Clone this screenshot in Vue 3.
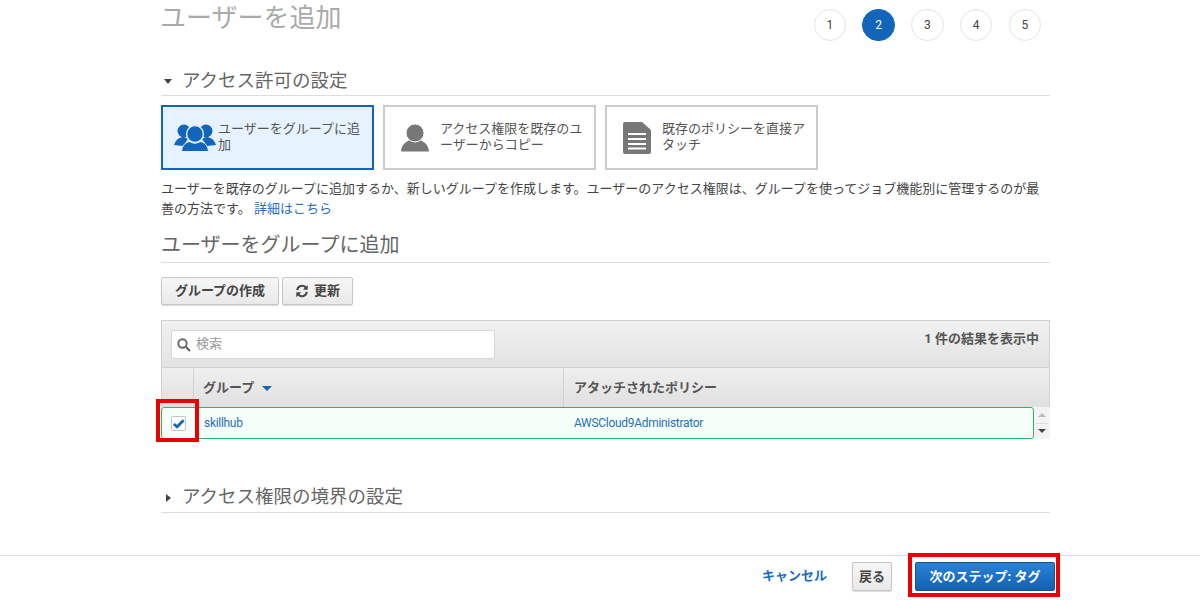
<script setup>
const steps = [1, 2, 3, 4, 5]
const cards = [
  { text: 'ユーザーをグループに追加', icon: 'group', active: true },
  { text: 'アクセス権限を既存のユーザーからコピー', icon: 'user', active: false },
  { text: '既存のポリシーを直接アタッチ', icon: 'doc', active: false },
]
</script>

<template>
  <div class="page">
    <div class="main">
      <header class="top">
        <h1 class="title">ユーザーを追加</h1>
        <ol class="steps">
          <li v-for="s in steps" :key="s" class="step" :class="{ current: s === 2 }">{{ s }}</li>
        </ol>
      </header>

      <div class="section-head first">
        <span class="caret down"></span>
        <h2>アクセス許可の設定</h2>
      </div>

      <div class="cards">
        <div v-for="c in cards" :key="c.icon" class="card" :class="{ active: c.active }">
          <svg v-if="c.icon === 'group'" class="ico group" viewBox="0 0 42 28">
            <g fill="#1166bb">
              <circle cx="10" cy="7" r="6.500" />
              <circle cx="32" cy="7" r="6.500" />
              <path d="M0 21 C2 15 6 13 10 13 L14 15 L9 22 Z" />
              <path d="M42 21 C40 15 36 13 32 13 L28 15 L33 22 Z" />
              <circle cx="21" cy="10" r="8.400" stroke="#e6f2fd" stroke-width="1.400" />
              <path d="M7.500 27.500 C8 21 12 18 16 17.500 C18 19.700 24 19.700 26 17.500 C30 18 34 21 34.500 27.500 Z" stroke="#e6f2fd" stroke-width="1" />
            </g>
          </svg>
          <svg v-else-if="c.icon === 'user'" class="ico user" viewBox="0 0 30 28">
            <path d="M1 27.500 C1.500 21 5.500 18 10 16 C12 19 18 19 20 16 C24.500 18 28.500 21 29 27.500 Z" fill="#777" />
            <circle cx="15" cy="9" r="9" fill="#777" stroke="#fff" stroke-width="0.900" />
          </svg>
          <svg v-else class="ico doc" viewBox="0 0 28 32">
            <path d="M2 0 H19 L28 8 V30 A2 2 0 0 1 26 32 H2 A2 2 0 0 1 0 30 V2 A2 2 0 0 1 2 0 Z" fill="#777" />
            <path d="M5 12 H23 M5 17 H23 M5 22 H23 M5 26.500 H23" stroke="#fff" stroke-width="2.200" />
          </svg>
          <span class="card-text">{{ c.text }}</span>
        </div>
      </div>

      <p class="desc">
        ユーザーを既存のグループに追加するか、新しいグループを作成します。ユーザーのアクセス権限は、グループを使ってジョブ機能別に管理するのが最善の方法です。
        <a class="link">詳細はこちら</a>
      </p>

      <div class="sub-head"><h2>ユーザーをグループに追加</h2></div>

      <div class="actions">
        <button class="btn">グループの作成</button>
        <button class="btn refresh">
          <svg class="refresh-ico" viewBox="0 0 16 16">
            <path d="M2.500 7 A5.600 5.600 0 0 1 12.300 4 M13.500 9 A5.600 5.600 0 0 1 3.700 12" fill="none" stroke="#444" stroke-width="2.200" />
            <path d="M14.500 1 V6.500 H9 Z M1.500 15 V9.500 H7 Z" fill="#444" />
          </svg>
          更新
        </button>
      </div>

      <div class="table">
        <div class="toolbar">
          <div class="search">
            <svg class="search-ico" viewBox="0 0 14 14">
              <circle cx="5.500" cy="5.500" r="4.200" fill="none" stroke="#666" stroke-width="1.900" />
              <path d="M8.800 8.800 L13 13" stroke="#666" stroke-width="2.300" />
            </svg>
            <span class="placeholder">検索</span>
          </div>
          <span class="count">1 件の結果を表示中</span>
        </div>
        <div class="thead">
          <div class="th th-check"></div>
          <div class="th th-group">グループ <span class="sort"></span></div>
          <div class="th th-policy">アタッチされたポリシー</div>
        </div>
        <div class="tbody">
          <div class="row">
            <div class="td-check">
              <span class="checkbox">
                <svg viewBox="0 0 14 14"><path d="M2 7.500 L5.500 10.500 L12.500 3.500" fill="none" stroke="#1166bb" stroke-width="3" /></svg>
              </span>
            </div>
            <a class="td-group link">skillhub</a>
            <a class="td-policy link">AWSCloud9Administrator</a>
          </div>
          <div class="scroll">
            <span class="tri up"></span>
            <span class="scroll-line"></span>
            <span class="tri dn"></span>
          </div>
        </div>
        <div class="mark mark-check"></div>
      </div>

      <div class="section-head last">
        <span class="caret right"></span>
        <h2>アクセス権限の境界の設定</h2>
      </div>
    </div>

    <footer class="footer">
      <a class="cancel">キャンセル</a>
      <button class="btn back">戻る</button>
      <span class="next-wrap">
        <button class="next">次のステップ: タグ</button>
        <span class="mark mark-next"></span>
      </span>
    </footer>
  </div>
</template>

<style>
html, body { margin: 0; background: #fff; }
</style>

<style scoped>
.page {
  width: 1200px;
  height: 600px;
  overflow: hidden;
  display: flex;
  flex-direction: column;
  font-family: Roboto, "Noto Sans CJK JP", sans-serif;
  color: #444;
  font-size: 13px;
}
.main { width: 889px; margin-left: 161px; height: 555px; box-sizing: border-box; }
h1, h2, p, ol { margin: 0; padding: 0; font-weight: 400; }
.top { display: flex; justify-content: space-between; height: 63px; }
.title { font-size: 26px; line-height: 36px; color: #aaa; margin-left: -1px; }
.steps { display: flex; gap: 16.250px; list-style: none; margin: 8.500px 9px 0 0; }
.step {
  width: 32.500px; height: 32.500px; box-sizing: border-box; border-radius: 50%;
  border: 1px solid #e4e4e4; display: flex; align-items: center; justify-content: center;
  font-size: 12px; color: #444;
}
.step.current { background: #1166bb; border-color: #1166bb; color: #fff; }
.section-head { display: flex; align-items: flex-end; border-bottom: 1px solid #ddd; height: 33px; box-sizing: border-box; }
.section-head h2 { font-size: 18.500px; color: #666; line-height: 27px; }
.section-head.last h2 { line-height: 29px; }
.caret { width: 0; height: 0; margin-left: 3px; margin-right: 10px; border-style: solid; border-color: transparent; }
.caret.down { border-width: 5px 4.500px 0; border-top-color: #444; margin-bottom: 11px; }
.caret.right { border-width: 4.500px 0 4.500px 5px; border-left-color: #444; margin-left: 5px; margin-right: 11px; margin-bottom: 10px; }
.cards { display: flex; gap: 9px; margin-top: 9px; }
.card {
  width: 213px; height: 65px; box-sizing: border-box; border: 2px solid #ccc; background: #fff;
  display: flex; align-items: center; color: #555; font-size: 13px; line-height: 16px;
}
.card.active { border-color: #1166bb; background: #e6f2fd; }
.card-text { display: block; padding-bottom: 2px; }
.ico { flex: none; }
.group { width: 42px; height: 28px; margin: 0 2px 0 11px; }
.user { width: 30px; height: 28px; margin: 0 10px 0 15px; }
.doc { width: 28px; height: 32px; margin: 0 11px 0 16px; }
.desc { margin-top: 9px; line-height: 20px; font-size: 13px; color: #444; height: 40px; }
.link { color: #2a6fbb; }
.sub-head { border-bottom: 1px solid #ddd; height: 44px; box-sizing: border-box; }
.sub-head h2 { font-size: 20px; color: #666; line-height: 30px; padding-top: 11px; }
.actions { display: flex; gap: 3px; margin-top: 14px; }
.btn {
  height: 28px; box-sizing: border-box; padding: 0 0 3px; border: 1px solid #c6c6c6; border-radius: 2px;
  background: linear-gradient(#f7f7f7, #e9e9e9); color: #444; font: 700 13px Roboto, "Noto Sans CJK JP", sans-serif;
  box-shadow: 0 1px 1px rgba(0,0,0,.15); display: flex; align-items: center; justify-content: center;
}
.actions .btn { width: 118px; }
.actions .refresh { width: 71px; gap: 5px; }
.refresh-ico { width: 14px; height: 14px; margin-top: 2px; }
.table { position: relative; margin-top: 15px; }
.toolbar {
  height: 47px; box-sizing: border-box; border: 1px solid #d2d2d2; border-bottom: 0;
  background: linear-gradient(#f1f1f1, #e3e3e3); display: flex; justify-content: space-between; padding: 9px 10px 0 9px;
}
.search {
  width: 324px; height: 29px; box-sizing: border-box; border: 1px solid #d6d6d6; border-radius: 3px;
  background: #fff; display: flex; align-items: center; padding-left: 5px; gap: 5px;
}
.search-ico { width: 14px; height: 14px; }
.placeholder { color: #999; font-size: 13px; padding-bottom: 4px; }
.count { font-weight: 700; font-size: 13px; color: #555; line-height: 18px; }
.thead {
  display: flex; height: 40px; box-sizing: border-box; border: 1px solid #d2d2d2; border-bottom: 0;
  background: linear-gradient(#efefef, #e0e0e0);
}
.th { display: flex; align-items: center; font-weight: 700; font-size: 13px; color: #555; border-right: 1px solid #d2d2d2; box-sizing: border-box; padding-bottom: 2px; }
.th-check { width: 32px; }
.th-group { width: 370px; padding-left: 9px; gap: 8px; }
.th-policy { flex: 1; padding-left: 10px; border-right: 0; }
.sort { width: 0; height: 0; border-style: solid; border-color: transparent; border-width: 5px 5px 0; border-top-color: #1166bb; margin-top: 3px; }
.tbody { display: flex; height: 33px; }
.row {
  width: 873px; height: 32px; box-sizing: border-box; border: 1px solid #2fb566; border-radius: 3px; background: #f5fff9;
  display: flex; align-items: center; font-size: 12px; letter-spacing: -0.300px;
}
.td-check { width: 31px; display: flex; justify-content: center; margin-left: 1px; }
.td-group { width: 370px; padding-left: 10px; box-sizing: border-box; }
.td-policy { padding-left: 10px; }
.checkbox {
  width: 15px; height: 15px; box-sizing: border-box; border: 1px solid #c4c4c4; border-radius: 2px; background: #fff; display: block;
}
.checkbox svg { display: block; width: 13px; height: 13px; }
.scroll { width: 16px; height: 32px; display: flex; flex-direction: column; align-items: center; background: #f4f4f4; }
.tri { width: 0; height: 0; border-style: solid; border-color: transparent; }
.tri.up { border-width: 0 4px 4px; border-bottom-color: #bbb; margin-top: 6px; }
.scroll-line { width: 12px; height: 1px; background: #ddd; margin: 6px 0 5px; }
.tri.dn { border-width: 4px 4px 0; border-top-color: #444; }
.mark { position: absolute; box-sizing: border-box; border: 4px solid #e90000; pointer-events: none; }
.mark-check { left: -5px; top: 79px; width: 43px; height: 43px; }
.section-head.last { margin-top: 40px; }
.footer {
  height: 45px; box-sizing: border-box; border-top: 1px solid #ddd; display: flex; align-items: flex-start; padding-top: 6px;
}
.cancel { margin-left: 762px; color: #1a6ebd; font-weight: 700; font-size: 13px; line-height: 27px; width: 90px; }
.back { width: 40px; height: 29px; }
.next-wrap { position: relative; margin-left: 23px; display: block; }
.next {
  display: block; width: 140px; height: 29px; padding: 0 0 2px; border: 1px solid #15528f; border-radius: 2px;
  background: linear-gradient(#2a82d6, #1261b2); color: #fff; font: 700 13px Roboto, "Noto Sans CJK JP", sans-serif;
}
.mark-next { left: -7px; top: -9px; width: 152px; height: 44px; }
</style>
